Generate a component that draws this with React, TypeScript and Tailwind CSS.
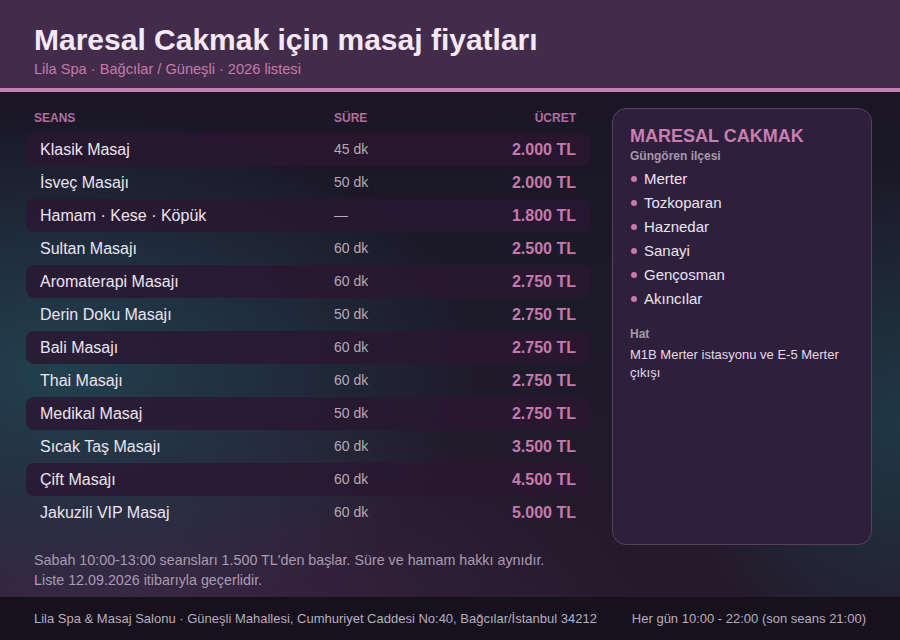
const rows = [
  { name: "Klasik Masaj", time: "45 dk", price: "2.000 TL" },
  { name: "İsveç Masajı", time: "50 dk", price: "2.000 TL" },
  { name: "Hamam · Kese · Köpük", time: "—", price: "1.800 TL" },
  { name: "Sultan Masajı", time: "60 dk", price: "2.500 TL" },
  { name: "Aromaterapi Masajı", time: "60 dk", price: "2.750 TL" },
  { name: "Derin Doku Masajı", time: "50 dk", price: "2.750 TL" },
  { name: "Bali Masajı", time: "60 dk", price: "2.750 TL" },
  { name: "Thai Masajı", time: "60 dk", price: "2.750 TL" },
  { name: "Medikal Masaj", time: "50 dk", price: "2.750 TL" },
  { name: "Sıcak Taş Masajı", time: "60 dk", price: "3.500 TL" },
  { name: "Çift Masajı", time: "60 dk", price: "4.500 TL" },
  { name: "Jakuzili VIP Masaj", time: "60 dk", price: "5.000 TL" },
];

const areas = ["Merter", "Tozkoparan", "Haznedar", "Sanayi", "Gençosman", "Akıncılar"];

export default function App() {
  return (
    <div className="w-[900px] h-[640px] flex flex-col overflow-hidden bg-[#1a1522] font-['Liberation_Sans',Arial,sans-serif]">
      {/* Header */}
      <header className="h-[92px] shrink-0 bg-[#432c4b] border-b-4 border-[#c482b2] px-[34px] pt-[21px]">
        <h1 className="text-[30px] leading-[37px] font-bold text-[#f6e8f6]">Maresal Cakmak için masaj fiyatları</h1>
        <p className="text-[14.6px] leading-[18px] text-[#c57aae] mt-[2px]">Lila Spa · Bağcılar / Güneşli · 2026 listesi</p>
      </header>

      {/* Main */}
      <main className="flex-1 flex flex-col bg-[radial-gradient(ellipse_420px_260px_at_60px_280px,#22404f_0%,transparent_100%),radial-gradient(ellipse_520px_220px_at_120px_520px,#3c2544_0%,transparent_100%),radial-gradient(ellipse_220px_260px_at_900px_330px,#1f3844_0%,transparent_100%),linear-gradient(180deg,#1a1626_0%,#1d1a2a_45%,#251a2c_100%)]">
        <div className="flex-1 flex gap-[22px] pl-[26px] pr-[28px] pt-[17px]">
          {/* Table */}
          <div className="w-[564px] flex flex-col">
            <div className="flex items-center h-[18px] px-[8px] text-[12px] font-bold text-[#b06fa0] uppercase">
              <span className="w-[300px]">Seans</span>
              <span className="w-[100px]">Süre</span>
              <span className="flex-1 text-right pr-[6px]">Ücret</span>
            </div>
            <div className="flex flex-col mt-[6px]">
              {rows.map((r, i) => (
                <div
                  key={r.name}
                  className={
                    "flex items-center h-[33px] px-[14px] rounded-[8px] " +
                    (i % 2 === 0 ? "bg-[#2b1731]/80" : "")
                  }
                >
                  <span className="w-[294px] text-[16px] text-[#ece4f0]">{r.name}</span>
                  <span className="w-[100px] text-[14px] text-[#b3aab8]">{r.time}</span>
                  <span className="flex-1 text-right text-[16px] font-bold text-[#c57aae]">{r.price}</span>
                </div>
              ))}
            </div>
          </div>

          {/* Card */}
          <aside className="w-[260px] h-[437px] -mt-[1px] rounded-[14px] border border-[#56405f] bg-[#2e1f3c] px-[17px] pt-[15px]">
            <h2 className="text-[18px] leading-[24px] font-bold text-[#c77fb0]">MARESAL CAKMAK</h2>
            <p className="text-[12px] leading-[16px] font-bold text-[#a898aa]">Güngören ilçesi</p>
            <ul className="mt-[3px] flex flex-col">
              {areas.map((a) => (
                <li key={a} className="flex items-center h-[24px] text-[15px] text-[#ece4f0]">
                  <span className="w-[6px] h-[6px] rounded-full bg-[#c57aae] ml-[1px] mr-[7px]" />
                  {a}
                </li>
              ))}
            </ul>
            <p className="mt-[15px] text-[12px] leading-[16px] font-bold text-[#a898aa]">Hat</p>
            <p className="mt-[4px] text-[13px] leading-[18px] text-[#e4dbe8]">M1B Merter istasyonu ve E-5 Merter çıkışı</p>
          </aside>
        </div>

        <div className="px-[34px] pb-[7px] text-[14.3px] leading-[20px] text-[#a99bb0]">
          <p>Sabah 10:00-13:00 seansları 1.500 TL'den başlar. Süre ve hamam hakkı aynıdır.</p>
          <p>Liste 12.09.2026 itibarıyla geçerlidir.</p>
        </div>
      </main>

      {/* Footer */}
      <footer className="h-[43px] shrink-0 bg-[#16111d] flex items-center justify-between px-[34px] text-[13px] text-[#b8adc0]">
        <span>Lila Spa &amp; Masaj Salonu · Güneşli Mahallesi, Cumhuriyet Caddesi No:40, Bağcılar/İstanbul 34212</span>
        <span>Her gün 10:00 - 22:00 (son seans 21:00)</span>
      </footer>
    </div>
  );
}
